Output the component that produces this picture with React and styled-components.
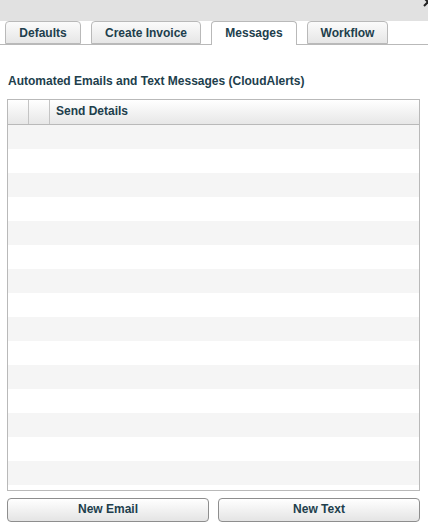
import React from "react";
import styled, { createGlobalStyle } from "styled-components";

const GlobalStyle = createGlobalStyle`
  html, body {
    margin: 0;
    padding: 0;
    background: #ffffff;
  }
  body {
    font-family: "Liberation Sans", Arial, Helvetica, sans-serif;
    color: #213e4c;
  }
`;

const Page = styled.div`
  width: 428px;
  height: 532px;
  overflow: hidden;
  display: flex;
  flex-direction: column;
`;

const TitleStrip = styled.div`
  position: relative;
  height: 21px;
  background: #e1e1e1;
`;

/* dialog close cross, sitting in the corner of the title strip */
const CloseIcon = styled.svg`
  position: absolute;
  top: -3px;
  right: -5px;
  width: 10px;
  height: 10px;
`;

const TabStrip = styled.div`
  display: flex;
  align-items: flex-end;
  gap: 10px;
  height: 23px;
  padding-left: 5px;
  border-bottom: 1px solid #b9b9b9;
`;

const Tab = styled.div`
  box-sizing: border-box;
  height: ${(p) => (p.$active ? "24px" : "23px")};
  margin-bottom: ${(p) => (p.$active ? "-1px" : "0")};
  width: ${(p) => p.$w}px;
  display: flex;
  align-items: center;
  justify-content: center;
  padding-bottom: ${(p) => (p.$active ? "1px" : "0")};
  font-size: 12px;
  font-weight: bold;
  color: #213e4c;
  border: 1px solid #b9b9b9;
  border-bottom: ${(p) => (p.$active ? "none" : "1px solid #b9b9b9")};
  border-radius: 4px 4px 0 0;
  background: ${(p) =>
    p.$active ? "#ffffff" : "linear-gradient(#fbfbfb, #e6e6e6)"};
`;

const Content = styled.div`
  display: flex;
  flex-direction: column;
  padding: 29px 8px 0 7px;
`;

const Heading = styled.div`
  font-size: 12px;
  font-weight: bold;
  line-height: 14px;
  padding-left: 1px;
  color: #213e4c;
`;

const Grid = styled.div`
  margin-top: 11px;
  box-sizing: border-box;
  height: 392px;
  border: 1px solid #b9b9b9;
  display: flex;
  flex-direction: column;
  overflow: hidden;
`;

const HeaderRow = styled.div`
  display: grid;
  grid-template-columns: 20px 21px 1fr;
  height: 24px;
  border-bottom: 1px solid #b9b9b9;
  background: linear-gradient(#ffffff, #e7e7e7);
`;

const HeaderCell = styled.div`
  display: flex;
  align-items: center;
  padding: 0 0 2px 6px;
  font-size: 12px;
  font-weight: bold;
  color: #213e4c;
  border-left: ${(p) => (p.$divided ? "1px solid #c4c4c4" : "none")};
`;

const Row = styled.div`
  flex: none;
  height: 24px;
  background: ${(p) => (p.$odd ? "#f5f5f5" : "#ffffff")};
`;

const Actions = styled.div`
  display: grid;
  grid-template-columns: 1fr 1fr;
  gap: 9px;
  margin-top: 7px;
`;

const Button = styled.button`
  box-sizing: border-box;
  height: 24px;
  padding: 0 0 2px;
  font-family: "Liberation Sans", Arial, Helvetica, sans-serif;
  font-size: 12px;
  font-weight: bold;
  color: #213e4c;
  border: 1px solid #8e8e8e;
  border-radius: 4px;
  background: linear-gradient(#ffffff, #e4e4e4);
  cursor: pointer;
`;

const tabs = [
  { label: "Defaults", w: 76 },
  { label: "Create Invoice", w: 110 },
  { label: "Messages", w: 86, active: true },
  { label: "Workflow", w: 81 },
];

export default function App() {
  const rows = Array.from({ length: 15 }, (_, i) => i);
  return (
    <Page>
      <GlobalStyle />
      <TitleStrip>
        <CloseIcon viewBox="0 0 10 10">
          <path d="M1 1 L9 9 M9 1 L1 9" stroke="#222" strokeWidth="2" />
        </CloseIcon>
      </TitleStrip>
      <TabStrip>
        {tabs.map((t) => (
          <Tab key={t.label} $w={t.w} $active={t.active}>
            {t.label}
          </Tab>
        ))}
      </TabStrip>
      <Content>
        <Heading>Automated Emails and Text Messages (CloudAlerts)</Heading>
        <Grid>
          <HeaderRow>
            <HeaderCell />
            <HeaderCell $divided />
            <HeaderCell $divided>Send Details</HeaderCell>
          </HeaderRow>
          {rows.map((i) => (
            <Row key={i} $odd={i % 2 === 0} />
          ))}
        </Grid>
        <Actions>
          <Button>New Email</Button>
          <Button>New Text</Button>
        </Actions>
      </Content>
    </Page>
  );
}
